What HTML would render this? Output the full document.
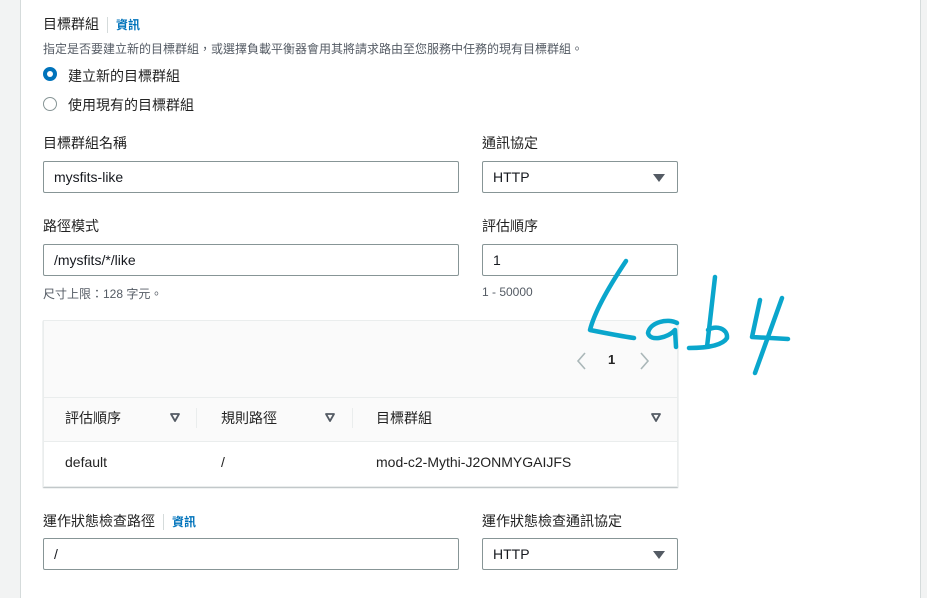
<!DOCTYPE html>
<html><head><meta charset="utf-8"><style>
body{margin:0;width:927px;height:587px;overflow:hidden;background:#f2f3f3;font-family:"Liberation Sans","Noto Sans CJK TC",sans-serif;color:#16191f;position:relative}
.panel{position:absolute;left:20px;top:-2px;width:899px;height:600px;background:#fff;border-left:1px solid #d5dbdb;border-right:1px solid #d5dbdb}
.t{position:absolute;font-size:14px;white-space:nowrap;color:#232323}
.s{position:absolute;font-size:12px;color:#545b64;white-space:nowrap}
.in{position:absolute;border:1px solid #879596;border-radius:2px;background:#fff;height:32px;box-sizing:border-box;font-size:14px;line-height:30px;padding-left:10px}
.tri{position:absolute;width:0;height:0;border-left:6px solid transparent;border-right:6px solid transparent;border-top:8px solid #545b64}
.link{color:#0073bb;font-size:12px;font-weight:bold}
.sep{display:inline-block;width:1px;height:16px;background:#d5dbdb;vertical-align:middle;margin:0 8px}
</style></head><body>
<div class="panel"></div>
<div class="t" style="left:43px;top:14px">目標群組<span class="sep"></span><span class="link">資訊</span></div>
<div class="s" style="left:43px;top:40px">指定是否要建立新的目標群組，或選擇負載平衡器會用其將請求路由至您服務中任務的現有目標群組。</div>
<div style="position:absolute;left:43px;top:67px;width:14px;height:14px;border-radius:50%;background:#0073bb;box-sizing:border-box;border:4px solid #0073bb"><div style="width:6px;height:6px;background:#fff;border-radius:50%"></div></div>
<div class="t" style="left:68px;top:66px">建立新的目標群組</div>
<div style="position:absolute;left:43px;top:97px;width:14px;height:14px;border-radius:50%;border:1px solid #879596;box-sizing:border-box"></div>
<div class="t" style="left:68px;top:95px">使用現有的目標群組</div>
<div class="t" style="left:43px;top:133px">目標群組名稱</div>
<div class="in" style="left:43px;top:161px;width:416px">mysfits-like</div>
<div class="t" style="left:482px;top:133px">通訊協定</div>
<div class="in" style="left:482px;top:161px;width:196px">HTTP</div><div class="tri" style="left:653px;top:174px"></div>
<div class="t" style="left:43px;top:216px">路徑模式</div>
<div class="in" style="left:43px;top:244px;width:416px">/mysfits/*/like</div>
<div class="s" style="left:43px;top:285px">尺寸上限：128 字元。</div>
<div class="t" style="left:482px;top:216px">評估順序</div>
<div class="in" style="left:482px;top:244px;width:196px">1</div>
<div class="s" style="left:482px;top:285px">1 - 50000</div>
<div style="position:absolute;left:43px;top:320px;width:633px;height:165px;border:1px solid #eaeded;box-shadow:0 1px 1px rgba(0,28,36,.3);background:#fff">
 <div style="height:76px;background:#fafafa;border-bottom:1px solid #eaeded"></div>
 <div style="height:43px;background:#fafafa;border-bottom:1px solid #eaeded"></div>
</div>
<svg style="position:absolute;left:0;top:0" width="927" height="587" fill="none">
<path d="M585 353 L578 361 L585 369 M641 353 L648 361 L641 369" stroke="#aab7b8" stroke-width="1.6"/>
<g stroke="#545b64" stroke-width="1.8" stroke-linejoin="round"><path d="M171 414 L179 414 L175 421 Z"/><path d="M326 414 L334 414 L330 421 Z"/><path d="M652 414 L660 414 L656 421 Z"/></g>
</svg>
<div class="t" style="left:608px;top:352px;font-weight:bold;font-size:13px">1</div>
<div class="t" style="left:65px;top:408px">評估順序</div>
<div style="position:absolute;left:196px;top:408px;width:1px;height:20px;background:#eaeded"></div>
<div class="t" style="left:221px;top:408px">規則路徑</div>
<div style="position:absolute;left:352px;top:408px;width:1px;height:20px;background:#eaeded"></div>
<div class="t" style="left:376px;top:408px">目標群組</div>
<div class="t" style="left:65px;top:454px">default</div>
<div class="t" style="left:221px;top:454px">/</div>
<div class="t" style="left:376px;top:454px">mod-c2-Mythi-J2ONMYGAIJFS</div>
<div class="t" style="left:43px;top:511px">運作狀態檢查路徑<span class="sep"></span><span class="link">資訊</span></div>
<div class="in" style="left:43px;top:538px;width:416px">/</div>
<div class="t" style="left:482px;top:511px">運作狀態檢查通訊協定</div>
<div class="in" style="left:482px;top:538px;width:196px">HTTP</div><div class="tri" style="left:653px;top:551px"></div>
<svg style="position:absolute;left:0;top:0" width="927" height="587" fill="none" stroke="#0aa6cc" stroke-width="4.5" stroke-linecap="round" stroke-linejoin="round">
<path d="M626 261 C610 285 595 310 590 330 C605 333 620 336 634 338"/>
<path d="M677 323 C668 318 650 322 648 333 C650 342 668 338 675 330 L676 347"/>
<path d="M715 277 L707 347 M689 348 C705 348 722 346 727 338 C728 328 715 325 708 330"/>
<path d="M760 300 L752 337 L788 339 M782 298 L755 373"/>
</svg>
</body></html>
